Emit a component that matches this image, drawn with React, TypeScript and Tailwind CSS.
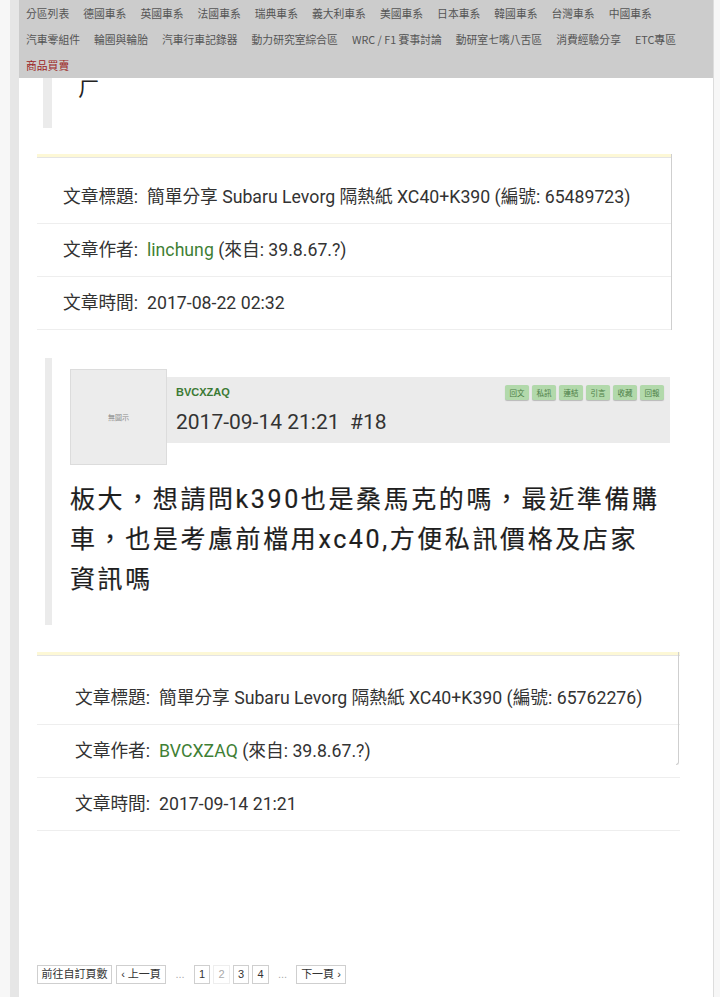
import React from "react";

const NAV_ROWS = [
  "分區列表",
  "德國車系",
  "英國車系",
  "法國車系",
  "瑞典車系",
  "義大利車系",
  "美國車系",
  "日本車系",
  "韓國車系",
  "台灣車系",
  "中國車系",
  "汽車零組件",
  "輪圈與輪胎",
  "汽車行車記錄器",
  "動力研究室綜合區",
  "WRC / F1 賽事討論",
  "動研室七嘴八舌區",
  "消費經驗分享",
  "ETC專區",
];

const ACTIONS = ["回文", "私訊", "連結", "引言", "收藏", "回報"];

const SANS = "font-['Roboto','Noto_Sans_CJK_TC',sans-serif]";

type InfoRow = { label: string; value: React.ReactNode };

function InfoCard({
  rows,
  right,
  indent,
  top,
}: {
  rows: InfoRow[];
  right: "full" | "short";
  indent: string;
  top: string;
}) {
  return (
    <div className="relative">
      <div className="h-[3px] bg-[#fdf8d6]" />
      <div className="h-px bg-[#e4e4e4]" />
      <div className={top}>
        {rows.map((row) => (
          <div
            key={row.label}
            className={`flex h-[53px] items-center border-b border-[#eeeeee] ${indent} text-[17.7px] text-[#333] ${SANS}`}
          >
            <span className="w-[84px] shrink-0">{row.label}</span>
            <span>{row.value}</span>
          </div>
        ))}
      </div>
      {right === "full" ? (
        <div className="absolute right-0 top-0 h-[176px] w-px bg-[#cfcfcf]" />
      ) : (
        <div className="absolute right-[1px] top-0 h-[113px] w-[3px] rounded-br-[4px] border-b border-r border-[#cfcfcf]" />
      )}
    </div>
  );
}

export default function App() {
  return (
    <div className="min-h-[997px] bg-[#f7f7f7] pl-[10px]">
      <div className="min-h-[997px] w-[704px] border-l-[9px] border-r border-l-[#e6e6e6] border-r-[#dddddd] bg-white">
        {/* 版區選單 */}
        <nav className="flex h-[78px] flex-wrap content-start gap-x-[14px] bg-[#cccccc] pl-[7px] font-['Noto_Sans_CJK_TC',sans-serif] text-[10.8px] leading-[26px] text-[#555]">
          {NAV_ROWS.map((item) => (
            <span key={item} className="whitespace-nowrap">
              {item}
            </span>
          ))}
          <span className="whitespace-nowrap text-[#9c2424]">商品買賣</span>
        </nav>

        {/* 上一則引言尾巴 */}
        <div className="ml-[24px] flex h-[50px]">
          <div className="w-[9px] bg-[#ebebeb]" />
          <span className="ml-[26px] mt-[-7px] font-['Noto_Sans_CJK_TC',sans-serif] text-[22px] leading-[30px] text-[#222]">
            ㄏ
          </span>
        </div>

        <div className="ml-[18px] mt-[26px] w-[635px]">
          <InfoCard
            right="full"
            indent="pl-[26px]"
            top="pt-[13px]"
            rows={[
              { label: "文章標題:", value: "簡單分享 Subaru Levorg 隔熱紙 XC40+K390 (編號: 65489723)" },
              {
                label: "文章作者:",
                value: (
                  <>
                    <span className="text-[#3f7f35]">linchung</span> (來自: 39.8.67.?)
                  </>
                ),
              },
              { label: "文章時間:", value: "2017-08-22 02:32" },
            ]}
          />
        </div>

        {/* 回覆 #18 */}
        <div className="ml-[26px] mt-[28px] flex h-[267px]">
          <div className="w-[7px] shrink-0 bg-[#ebebeb]" />
          <div className="pl-[18px] pt-[11px]">
            <div className="flex">
              <div className="flex h-[96px] w-[97px] shrink-0 items-center justify-center border border-[#dcdcdc] bg-[#ececec] font-['Noto_Sans_CJK_TC',sans-serif] text-[7px] text-[#888]">
                無圖示
              </div>
              <div className="mt-[8px] flex h-[66px] w-[503px] items-start justify-between bg-[#ebebeb] pl-[9px] pr-[6px]">
                <div className={SANS}>
                  <div className="mt-[8px] font-['Liberation_Sans',sans-serif] text-[11px] font-bold leading-[14px] text-[#3b7a35]">
                    BVCXZAQ
                  </div>
                  <div className="mt-[10px] whitespace-pre text-[21px] leading-[26px] text-[#333]">
                    {"2017-09-14 21:21  #18"}
                  </div>
                </div>
                <div className="mt-[8px] flex gap-[3px]">
                  {ACTIONS.map((a) => (
                    <span
                      key={a}
                      className="flex h-[15px] w-[24px] items-center justify-center rounded-[2px] bg-[#b2d9ab] font-['Noto_Sans_CJK_TC',sans-serif] text-[7.5px] text-[#4d7d47] shadow-[0_1px_1px_rgba(0,0,0,0.22)]"
                    >
                      {a}
                    </span>
                  ))}
                </div>
              </div>
            </div>
            <div className="mt-[15px] font-['Roboto','Noto_Sans_CJK_TC',sans-serif] text-[25px] font-normal leading-[40px] tracking-[2.6px] text-[#1e1e1e] [-webkit-text-stroke:0.2px_#1e1e1e]">
              <div>板大，想請問k390也是桑馬克的嗎，最近準備購</div>
              <div>車，也是考慮前檔用xc40,方便私訊價格及店家</div>
              <div>資訊嗎</div>
            </div>
          </div>
        </div>

        <div className="ml-[18px] mt-[27px] w-[643px]">
          <InfoCard
            right="short"
            indent="pl-[38px]"
            top="pt-[16px]"
            rows={[
              { label: "文章標題:", value: "簡單分享 Subaru Levorg 隔熱紙 XC40+K390 (編號: 65762276)" },
              {
                label: "文章作者:",
                value: (
                  <>
                    <span className="text-[#3f7f35]">BVCXZAQ</span> (來自: 39.8.67.?)
                  </>
                ),
              },
              { label: "文章時間:", value: "2017-09-14 21:21" },
            ]}
          />
        </div>

        {/* 分頁 */}
        <div className="ml-[18px] mt-[134px] flex items-center gap-[3px] font-['Liberation_Sans','Noto_Sans_CJK_TC',sans-serif] text-[11px] text-[#333]">
          <span className="flex h-[19px] w-[75px] items-center justify-center border border-[#cfcfcf]">前往自訂頁數</span>
          <span className="ml-[1px] flex h-[19px] w-[50px] items-center justify-center border border-[#cfcfcf]">‹ 上一頁</span>
          <span className="w-[22px] text-center text-[#aaa]">...</span>
          <span className="flex h-[19px] w-[16px] items-center justify-center border border-[#cfcfcf]">1</span>
          <span className="flex h-[19px] w-[17px] items-center justify-center border border-[#eeeeee] text-[#aaa]">2</span>
          <span className="flex h-[19px] w-[16px] items-center justify-center border border-[#cfcfcf]">3</span>
          <span className="flex h-[19px] w-[17px] items-center justify-center border border-[#cfcfcf]">4</span>
          <span className="w-[21px] text-center text-[#aaa]">...</span>
          <span className="flex h-[19px] w-[50px] items-center justify-center border border-[#cfcfcf]">下一頁 ›</span>
        </div>
      </div>
    </div>
  );
}
